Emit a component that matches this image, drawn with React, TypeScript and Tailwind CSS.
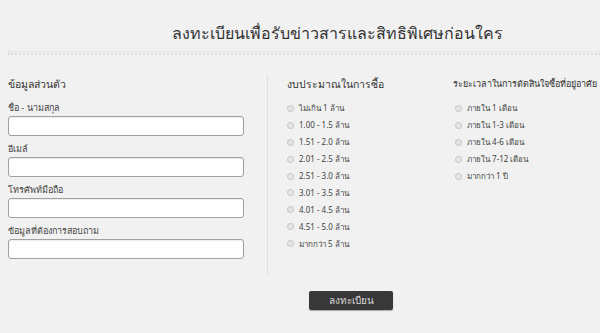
import React from 'react'

const budgets = [
  'ไม่เกิน 1 ล้าน',
  '1.00 - 1.5 ล้าน',
  '1.51 - 2.0 ล้าน',
  '2.01 - 2.5 ล้าน',
  '2.51 - 3.0 ล้าน',
  '3.01 - 3.5 ล้าน',
  '4.01 - 4.5 ล้าน',
  '4.51 - 5.0 ล้าน',
  'มากกว่า 5 ล้าน',
]

const periods = ['ภายใน 1 เดือน', 'ภายใน 1-3 เดือน', 'ภายใน 4-6 เดือน', 'ภายใน 7-12 เดือน', 'มากกว่า 1 ปี']

const fields = ['ชื่อ - นามสกุล', 'อีเมล์', 'โทรศัพท์มือถือ', 'ข้อมูลที่ต้องการสอบถาม']

function Radio({ label }: { label: string }) {
  return (
    <label className="flex items-center h-[16.9px] gap-[5px] text-[8px] text-[#444] whitespace-nowrap">
      <span className="w-[7px] h-[7px] rounded-full border border-[#c4c4c4] bg-[#e6e6e6] shrink-0" />
      <span>{label}</span>
    </label>
  )
}

export default function App() {
  return (
    <div className="w-[600px] h-[333px] bg-[#f1f1f1] overflow-hidden font-['Noto_Sans','DejaVu_Sans',sans-serif] text-[#333]">
      {/* Title */}
      <div className="h-[51px] flex items-start justify-center pt-[22px] pl-[75px]">
        <h1 className="text-[16px] leading-[22px] text-[#333] font-normal whitespace-nowrap">ลงทะเบียนเพื่อรับข่าวสารและสิทธิพิเศษก่อนใคร</h1>
      </div>
      <div className="ml-[8px] h-[4px] border-t border-[#d6d6d6] border-b-2 border-b-[#dcdcdc] border-dotted" />

      <div className="flex pt-[20px]">
        {/* Personal info */}
        <div className="w-[268px] shrink-0 pl-[8px] h-[200px] border-r border-[#e0e0e0]">
          <h2 className="text-[10.5px] leading-[14px] mt-[2px] mb-[10px] text-[#333]">ข้อมูลส่วนตัว</h2>
          <div className="flex flex-col">
            {fields.map((f) => (
              <div key={f} className="mb-[6px]">
                <div className="text-[9px] leading-[14px] mb-[1px] text-[#444]">{f}</div>
                <div className="w-[236px] h-[20px] bg-white border border-[#a0a0a0] rounded-[3px] shadow-[inset_0_1px_1px_rgba(0,0,0,0.08)]" />
              </div>
            ))}
          </div>
        </div>

        {/* Budget */}
        <div className="w-[185px] shrink-0 pl-[19px]">
          <h2 className="text-[10.5px] leading-[14px] mt-[2px] mb-[9px] text-[#333] whitespace-nowrap">งบประมาณในการซื้อ</h2>
          <div className="flex flex-col">
            {budgets.map((b) => (
              <Radio key={b} label={b} />
            ))}
          </div>
        </div>

        {/* Period */}
        <div className="flex-1 min-w-0">
          <h2 className="text-[9px] leading-[14px] mt-[2px] mb-[9px] text-[#333] whitespace-nowrap">ระยะเวลาในการตัดสินใจซื้อที่อยู่อาศัย</h2>
          <div className="flex flex-col pl-[2px]">
            {periods.map((p) => (
              <Radio key={p} label={p} />
            ))}
          </div>
        </div>
      </div>

      <div className="flex justify-center pl-[102px] mt-[16px]">
        <button className="w-[84px] h-[19px] bg-[#383838] text-[#d8d8d8] text-[10px] leading-[19px] rounded-[2px] shadow-[0_1px_1px_rgba(0,0,0,0.3)]">
          ลงทะเบียน
        </button>
      </div>
    </div>
  )
}
